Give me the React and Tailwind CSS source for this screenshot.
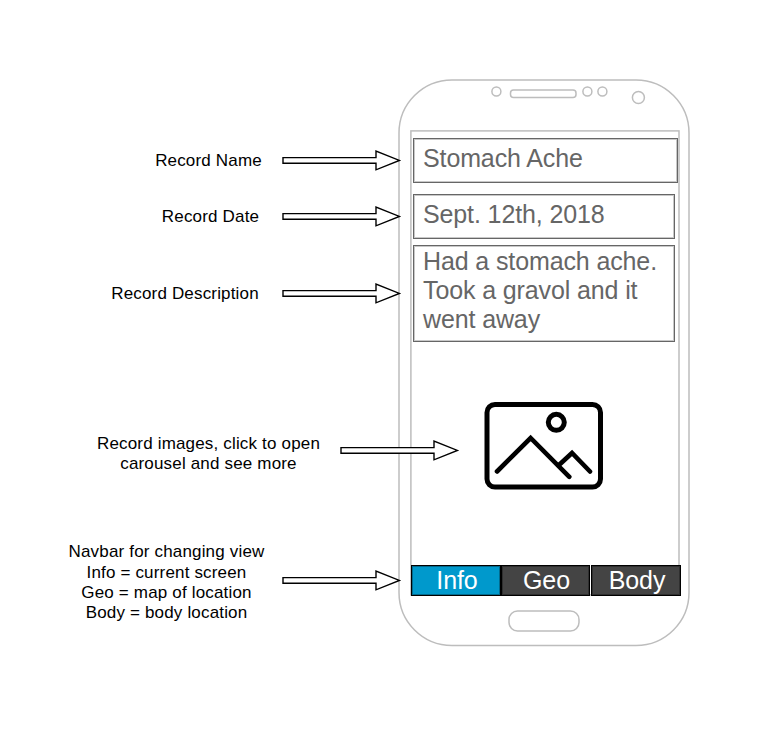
import React from "react";

function Arrow() {
  return (
    <svg className="block shrink-0" width="120" height="22" viewBox="0 0 120 22" fill="white" stroke="black" strokeWidth="1.4" strokeMiterlimit="10">
      <path d="M1 7.6H94V1.1L117.4 10.4L94 19.8V13.3H1Z" />
    </svg>
  );
}

function Note({ lines, className, labelClass }) {
  return (
    <div className={"flex items-center " + className}>
      <p className={"shrink-0 text-center text-[17px] leading-[20.3px] tracking-[0.17px] whitespace-nowrap " + labelClass}>
        {lines.map((line) => (
          <span key={line} className="block">{line}</span>
        ))}
      </p>
      <Arrow />
    </div>
  );
}

function PhoneFrame() {
  return (
    <svg className="absolute inset-0" width="294" height="570" viewBox="397 78 294 570" fill="none" stroke="#bdbdbd" strokeWidth="1.5">
      <rect x="399" y="80" width="290" height="565.5" rx="53" ry="53" fill="white" />
      <circle cx="496.4" cy="91.5" r="4.5" />
      <rect x="510.5" y="90" width="65.5" height="7.4" rx="3" />
      <circle cx="587.4" cy="91.5" r="4.5" />
      <circle cx="602.4" cy="91.5" r="4.5" />
      <circle cx="638.4" cy="97.5" r="6" />
      <rect x="410.9" y="130.9" width="268.1" height="464" />
      <rect x="509" y="611" width="70" height="20" rx="8.5" />
    </svg>
  );
}

function Field({ className, children }) {
  return (
    <div className={"border border-[#666] bg-white pl-[9px] text-[25px] tracking-[-0.12px] text-[#666] shadow-[inset_0_0_0_1px_#c8c8c8] " + className}>
      {children}
    </div>
  );
}

function Tab({ className, children }) {
  return (
    <div className={"flex h-[31px] items-center justify-center border border-black pl-[2px] text-[25px] leading-[29px] tracking-[-0.1px] text-white shadow-[inset_0_0_0_1px_rgba(0,0,0,0.3)] " + className}>
      {children}
    </div>
  );
}

function Phone() {
  return (
    <div className="relative mt-[78px] h-[570px] w-[294px] shrink-0">
      <PhoneFrame />
      <div className="relative flex h-full flex-col pt-[60px] pl-4">
        <Field className="h-[45px] w-[265px] leading-[38px]">Stomach Ache</Field>
        <Field className="mt-[11px] h-[45px] w-[262px] leading-[38px]">Sept. 12th, 2018</Field>
        <Field className="mt-[6px] h-[97px] w-[262px] pt-[1px] leading-[29.2px]">
          <p>Had a stomach ache.</p>
          <p>Took a gravol and it</p>
          <p>went away</p>
        </Field>
        <svg className="mt-[58px] ml-[70px] shrink-0" width="122" height="92" viewBox="483 400 122 92" fill="none" stroke="black" strokeWidth="5" strokeLinecap="round">
          <rect x="487" y="404.5" width="113.5" height="82.5" rx="8" />
          <circle cx="556.3" cy="422.3" r="8" />
          <path strokeWidth="4.6" d="M497 471.5L530.6 438L569.3 476.8M559 465L572 453L590 471.5" />
        </svg>
        <div className="mt-[73px] -ml-[2px] flex">
          <Tab className="w-[90px] bg-[#0099cc]">Info</Tab>
          <Tab className="w-[89px] bg-[#444]">Geo</Tab>
          <Tab className="ml-px w-[90px] bg-[#444]">Body</Tab>
        </div>
      </div>
    </div>
  );
}

export default function App() {
  return (
    <div className="flex h-[738px] w-[761px] overflow-hidden bg-white font-['Liberation_Sans',Arial,sans-serif] text-black">
      <div className="relative z-10 w-[397px] shrink-0 pt-[150px]">
        <Note className="h-[22px] pl-[154px]" labelClass="w-[128px] pr-[19px]" lines={["Record Name"]} />
        <Note className="mt-[34px] h-[22px] pl-[161px]" labelClass="w-[121px] pr-[22px]" lines={["Record Date"]} />
        <Note className="mt-[55px] h-[22px] pl-[110px]" labelClass="w-[172px] pr-[22px]" lines={["Record Description"]} />
        <Note className="mt-[125px] h-[42px] pl-[90px]" labelClass="w-[250px] pr-[13px] pt-[6px]" lines={["Record images, click to open", "carousel and see more"]} />
        <Note className="mt-[68px] h-[82px] pl-[60px]" labelClass="w-[222px] pr-[9px] pt-[4px]" lines={["Navbar for changing view", "Info = current screen", "Geo = map of location", "Body = body location"]} />
      </div>
      <Phone />
    </div>
  );
}
